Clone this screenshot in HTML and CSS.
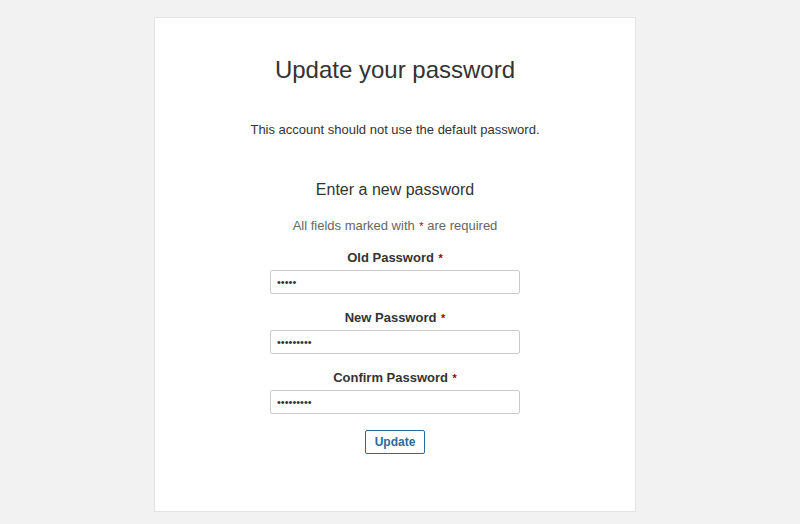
FILE: index.html
```html
<!DOCTYPE html>
<html lang="en">
<head>
  <meta charset="UTF-8">
  <meta name="viewport" content="width=device-width, initial-scale=1.0">
  <title>Update your password</title>
  <link rel="stylesheet" href="styles.css">
</head>
<body>
  <div class="card">
    <h1>Update your password</h1>
    <p class="intro">This account should not use the default password.</p>

    <form class="pw-form" onsubmit="return false;">
      <h2>Enter a new password</h2>
      <p class="required-note">All fields marked with <span class="req">*</span> are required</p>

      <div class="field">
        <label for="old-pw">Old Password <span class="req">*</span></label>
        <input type="password" id="old-pw" value="12345">
      </div>

      <div class="field">
        <label for="new-pw">New Password <span class="req">*</span></label>
        <input type="password" id="new-pw" value="123456789">
      </div>

      <div class="field">
        <label for="confirm-pw">Confirm Password <span class="req">*</span></label>
        <input type="password" id="confirm-pw" value="123456789">
      </div>

      <button type="submit" class="btn">Update</button>
    </form>
  </div>
</body>
</html>
```

FILE: styles.css
```css
/* Page */
body {
  font-family: 'Liberation Sans', Arial, sans-serif;
  background: #f2f2f2;
  color: #333;
  margin: 0;
  padding: 17px 0 0 154px;
}

.card {
  width: 480px;
  height: 493px;
  box-sizing: content-box;
  background: #fff;
  border: 1px solid #e3e3e3;
  text-align: center;
}

h1 {
  font-size: 24px;
  font-weight: normal;
  line-height: 26px;
  margin: 39px 0 0;
}

.intro {
  font-size: 13px;
  line-height: 18px;
  margin: 38px 0 0;
}

/* Formulaire */
.pw-form {
  width: 250px;
  margin: 41px auto 0;
}

h2 {
  font-size: 16px;
  font-weight: normal;
  line-height: 20px;
  margin: 0;
}

.required-note {
  font-size: 13px;
  line-height: 18px;
  color: #666;
  margin: 17px 0 0;
}

.req {
  color: #a30000;
  font-size: 11px;
  margin-left: 1px;
}

.field {
  margin-top: 15px;
}

.required-note + .field {
  margin-top: 14px;
}

label {
  display: block;
  font-size: 13px;
  font-weight: bold;
  line-height: 18px;
  margin-bottom: 3px;
}

input {
  display: block;
  width: 100%;
  height: 24px;
  box-sizing: border-box;
  padding: 0 6px;
  border: 1px solid #ccc;
  border-radius: 2px;
  font-family: 'Liberation Sans', Arial, sans-serif;
  font-size: 11px;
  color: #333;
}

.btn {
  margin-top: 16px;
  width: 60px;
  height: 24px;
  padding: 0;
  background: #fff;
  border: 1px solid #2b6a9a;
  border-radius: 2px;
  color: #2b6a9a;
  font-family: 'Liberation Sans', Arial, sans-serif;
  font-size: 12px;
  font-weight: bold;
  cursor: pointer;
}
```
